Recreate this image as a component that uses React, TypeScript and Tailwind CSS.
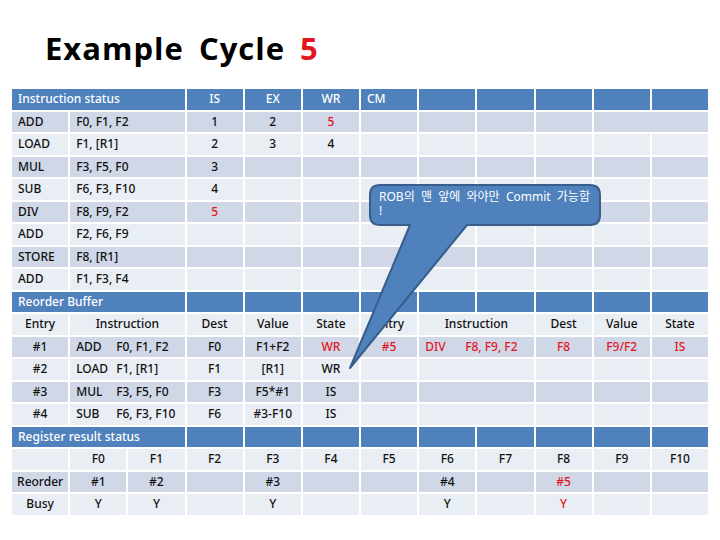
type Cell = { t?: string; span?: number; align?: 'l' | 'c'; red?: boolean; op?: string }
type Row = { kind: 'head' | 'dark' | 'light'; cells: Cell[] }

const E = (n: number): Cell[] => Array.from({ length: n }, () => ({}))

const ROWS: Row[] = [
  {
    kind: 'head',
    cells: [{ t: 'Instruction status', span: 3, align: 'l' }, { t: 'IS' }, { t: 'EX' }, { t: 'WR' }, { t: 'CM', align: 'l' }, ...E(5)],
  },
  {
    kind: 'dark',
    cells: [{ t: 'ADD', align: 'l' }, { t: 'F0, F1, F2', span: 2, align: 'l' }, { t: '1' }, { t: '2' }, { t: '5', red: true }, ...E(4), { span: 2 }],
  },
  { kind: 'light', cells: [{ t: 'LOAD', align: 'l' }, { t: 'F1, [R1]', span: 2, align: 'l' }, { t: '2' }, { t: '3' }, { t: '4' }, ...E(6)] },
  { kind: 'dark', cells: [{ t: 'MUL', align: 'l' }, { t: 'F3, F5, F0', span: 2, align: 'l' }, { t: '3' }, ...E(8)] },
  { kind: 'light', cells: [{ t: 'SUB', align: 'l' }, { t: 'F6, F3, F10', span: 2, align: 'l' }, { t: '4' }, ...E(8)] },
  { kind: 'dark', cells: [{ t: 'DIV', align: 'l' }, { t: 'F8, F9, F2', span: 2, align: 'l' }, { t: '5', red: true }, ...E(8)] },
  { kind: 'light', cells: [{ t: 'ADD', align: 'l' }, { t: 'F2, F6, F9', span: 2, align: 'l' }, ...E(9)] },
  { kind: 'dark', cells: [{ t: 'STORE', align: 'l' }, { t: 'F8, [R1]', span: 2, align: 'l' }, ...E(9)] },
  { kind: 'light', cells: [{ t: 'ADD', align: 'l' }, { t: 'F1, F3, F4', span: 2, align: 'l' }, ...E(9)] },

  { kind: 'head', cells: [{ t: 'Reorder Buffer', span: 3, align: 'l' }, ...E(9)] },
  {
    kind: 'light',
    cells: [
      { t: 'Entry' }, { t: 'Instruction', span: 2 }, { t: 'Dest' }, { t: 'Value' }, { t: 'State' },
      { t: 'Entry' }, { t: 'Instruction', span: 2 }, { t: 'Dest' }, { t: 'Value' }, { t: 'State' },
    ],
  },
  {
    kind: 'dark',
    cells: [
      { t: '#1' }, { op: 'ADD', t: 'F0, F1, F2', span: 2, align: 'l' }, { t: 'F0' }, { t: 'F1+F2' }, { t: 'WR', red: true },
      { t: '#5', red: true }, { op: 'DIV', t: 'F8, F9, F2', span: 2, align: 'l', red: true }, { t: 'F8', red: true }, { t: 'F9/F2', red: true }, { t: 'IS', red: true },
    ],
  },
  { kind: 'light', cells: [{ t: '#2' }, { op: 'LOAD', t: 'F1, [R1]', span: 2, align: 'l' }, { t: 'F1' }, { t: '[R1]' }, { t: 'WR' }, {}, { span: 2 }, ...E(3)] },
  { kind: 'dark', cells: [{ t: '#3' }, { op: 'MUL', t: 'F3, F5, F0', span: 2, align: 'l' }, { t: 'F3' }, { t: 'F5*#1' }, { t: 'IS' }, {}, { span: 2 }, ...E(3)] },
  { kind: 'light', cells: [{ t: '#4' }, { op: 'SUB', t: 'F6, F3, F10', span: 2, align: 'l' }, { t: 'F6' }, { t: '#3-F10' }, { t: 'IS' }, {}, { span: 2 }, ...E(3)] },

  { kind: 'head', cells: [{ t: 'Register result status', span: 3, align: 'l' }, ...E(9)] },
  {
    kind: 'light',
    cells: [{}, { t: 'F0' }, { t: 'F1' }, { t: 'F2' }, { t: 'F3' }, { t: 'F4' }, { t: 'F5' }, { t: 'F6' }, { t: 'F7' }, { t: 'F8' }, { t: 'F9' }, { t: 'F10' }],
  },
  {
    kind: 'dark',
    cells: [{ t: 'Reorder' }, { t: '#1' }, { t: '#2' }, {}, { t: '#3' }, {}, {}, { t: '#4' }, {}, { t: '#5', red: true }, {}, {}],
  },
  {
    kind: 'light',
    cells: [{ t: 'Busy' }, { t: 'Y' }, { t: 'Y' }, {}, { t: 'Y' }, {}, {}, { t: 'Y' }, {}, { t: 'Y', red: true }, {}, {}],
  },
]

const BG = { head: 'bg-[#4f81bd] text-white', dark: 'bg-[#d0d8e8] text-[#111]', light: 'bg-[#e9edf4] text-[#111]' }
const SPAN: Record<number, string> = { 1: 'col-span-1', 2: 'col-span-2', 3: 'col-span-3' }

function Callout() {
  return (
    <>
      <svg className="absolute left-0 top-0 pointer-events-none" width="720" height="540" viewBox="0 0 720 540">
        <path
          d="M380 185 H590 Q600 185 600 195 V215 Q600 225 590 225 H467 L350 368 L410 225 H380 Q370 225 370 215 V195 Q370 185 380 185 Z"
          fill="#4f81bd"
          stroke="#385d8a"
          strokeWidth="2"
          strokeLinejoin="round"
        />
      </svg>
      <div className="absolute left-[379px] top-[190px] text-[12px] leading-[14px] text-white whitespace-pre font-['Noto_Sans','Noto_Sans_CJK_KR',sans-serif]">
        {'ROB의  맨  앞에  와야만  Commit  가능함\n!'}
      </div>
    </>
  )
}

export default function App() {
  return (
    <div className="relative w-[720px] h-[540px] bg-white overflow-hidden font-['Noto_Sans','Noto_Sans_CJK_KR',sans-serif]">
      <h1 className="pl-[45px] pt-[30px] h-[66px] text-[31px] leading-[36px] font-bold tracking-[1px] [word-spacing:6px] text-black font-['Open_Sans',sans-serif]">
        Example Cycle <span className="text-[#e3171e]">5</span>
      </h1>

      <div className="mt-[23px] ml-[12px] w-[696px] grid grid-cols-12 auto-rows-[20.5px] gap-[2px] text-[12px] font-medium">
        {ROWS.map((row, r) =>
          row.cells.map((c, i) => (
            <div
              key={`${r}-${i}`}
              className={`${SPAN[c.span ?? 1]} ${BG[row.kind]} flex items-center whitespace-pre ${
                c.align === 'l' ? 'justify-start px-[6px]' : 'justify-center'
              } ${c.red ? 'text-[#e3171e]' : ''}`}
            >
              {c.op && <span className="w-[40px] shrink-0">{c.op}</span>}
              {c.t}
            </div>
          )),
        )}
      </div>

      <Callout />
    </div>
  )
}
